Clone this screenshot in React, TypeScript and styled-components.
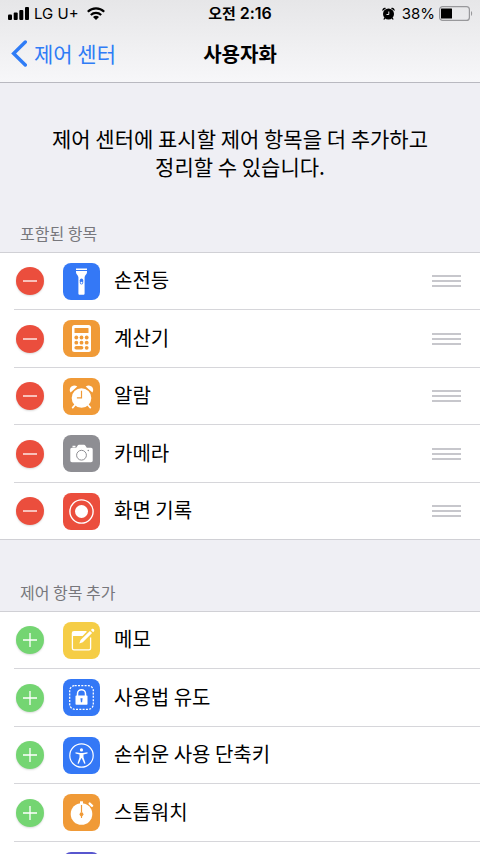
import React from 'react';
import styled, { createGlobalStyle } from 'styled-components';

const GlobalStyle = createGlobalStyle`
  * { box-sizing: border-box; }
  body {
    margin: 0;
    background: #efeff4;
    color: #000;
    font-family: Inter, "Noto Sans CJK KR", sans-serif;
  }
  button { font: inherit; border: 0; padding: 0; margin: 0; cursor: pointer; }
`;

const korean = '"Noto Sans CJK KR", sans-serif';

const Screen = styled.div`
  display: flex;
  flex-direction: column;
  height: 100vh;
  overflow: hidden;
`;

const TopBar = styled.header`
  flex: none;
  background: linear-gradient(#e6e6e8, #f7f7f9);
  border-bottom: 1px solid #b9b9c0;
`;

const StatusBar = styled.div`
  display: grid;
  grid-template-columns: 1fr auto 1fr;
  align-items: center;
  height: 27px;
  padding: 0 7px;
  font-size: 16px;
  line-height: 20px;
`;

const StatusGroup = styled.div<{ $end?: boolean }>`
  display: flex;
  align-items: center;
  justify-content: ${(p) => (p.$end ? 'flex-end' : 'flex-start')};
  gap: ${(p) => (p.$end ? 4 : 5)}px;
  white-space: nowrap;
  svg { flex: none; }
`;

const Carrier = styled.span`
  font-size: 15px;
  margin-right: 3px;
`;

const Clock = styled.time`
  font-weight: 600;
`;

const Meridiem = styled.span`
  font-size: 15px;
`;

const Percent = styled.span`
  margin-left: 3px;
  font-size: 15px;
`;

const NavBar = styled.nav`
  display: grid;
  grid-template-columns: 1fr auto 1fr;
  align-items: center;
  height: 55px;
  padding: 0 11px 2px;
  font-family: ${korean};
`;

const BackLink = styled.a`
  display: flex;
  align-items: center;
  gap: 7px;
  color: #2f7cf6;
  font-size: 21px;
  line-height: 30px;
  text-decoration: none;
`;

const BackText = styled.span`
  padding-bottom: 2px;
`;

const Title = styled.h1`
  margin: 0;
  font-size: 20px;
  font-weight: 700;
  line-height: 30px;
`;

const Content = styled.main`
  flex: 1;
  min-height: 0;
  overflow-y: auto;
  scrollbar-width: none;
  font-family: ${korean};
`;

const Intro = styled.p`
  margin: 0;
  padding: 41px 48px 40px;
  font-size: 21px;
  line-height: 28px;
  text-align: center;
  word-break: keep-all;
`;

const Section = styled.section`
  & + & { padding-top: 40px; }
`;

const SectionTitle = styled.h2`
  margin: 0;
  padding: 1px 20px 7px;
  color: #77777c;
  font-size: 16px;
  font-weight: 400;
  line-height: 24px;
  ${Section} + ${Section} > & { padding-top: 0; }
`;

const List = styled.ul`
  margin: 0;
  padding: 0;
  list-style: none;
  background: #fff;
  border-bottom: 1px solid #d0d0d5;
`;

const Row = styled.li`
  display: flex;
  height: 58px;
  padding-left: 14px;
  &:nth-child(odd) { height: 57px; }
  &:first-child { background: linear-gradient(#d0d0d5, #d0d0d5) top / 100% 1px no-repeat; }
`;

const RowBody = styled.div`
  flex: 1;
  display: flex;
  align-items: center;
  padding: 1px 19px 0 2px;
  ${Row} + ${Row} & { border-top: 1px solid #d6d6da; padding-top: 0; }
`;

const ActionButton = styled.button<{ $add?: boolean }>`
  display: grid;
  place-items: center;
  width: 28px;
  height: 28px;
  border-radius: 50%;
  color: #fff;
  background: ${(p) => (p.$add ? '#74d572' : '#eb4e3d')};
  box-shadow: 0 1px 2px rgba(0, 0, 0, 0.15);
`;

const AppIcon = styled.span<{ $color: string }>`
  display: block;
  width: 37px;
  height: 37px;
  margin: 0 14px 0 19px;
  border-radius: 8px;
  color: ${(p) => p.$color};
  background: ${(p) => p.$color};
  svg { display: block; }
`;

const Label = styled.span`
  flex: 1;
  padding-bottom: 2px;
  font-size: 20px;
  line-height: 30px;
`;

const DragHandle = styled.button`
  display: block;
  color: #c7c7cc;
  background: none;
  svg { display: block; }
`;

const glyphs: Record<string, React.ReactNode> = {
  flashlight: (
    <>
      <path d="M13 5.5h11v1.5H13z M13 8h11v1.2c0 2.2-2.4 3-2.4 5V30.500c0 .8-.5 1.300-1.300 1.300h-3.600c-.8 0-1.300-.5-1.300-1.300V14.200c0-2-2.400-2.800-2.400-5z" fill="#fff" />
      <rect x="16.800" y="15.500" width="3.400" height="6" rx="1.700" fill="currentColor" />
      <circle cx="18.500" cy="19.700" r="1" fill="#fff" />
    </>
  ),
  calculator: (
    <>
      <rect x="9" y="5" width="19" height="27" rx="2.500" fill="#fff" />
      <g fill="currentColor">
        <rect x="11.500" y="8" width="14" height="5" rx="0.600" />
        {[17.500, 22.700].map((y) => [13.300, 18.500, 23.700].map((x) => <circle key={`${x}-${y}`} cx={x} cy={y} r="1.900" />))}
        <rect x="11.400" y="26" width="9" height="3.600" rx="1.800" />
        <circle cx="23.700" cy="27.800" r="1.900" />
      </g>
    </>
  ),
  alarm: (
    <>
      <circle cx="18.500" cy="20" r="9.800" fill="#fff" />
      <path d="M7.600 14.600C4.800 10.300 9.600 5.400 14.300 8.400zM29.400 14.600c2.800-4.300-2-9.200-6.700-6.200z" fill="#fff" />
      <path d="M12 27l-2.300 2.600M25 27l2.300 2.600" stroke="#fff" strokeWidth="1.800" strokeLinecap="round" />
      <path d="M18.500 12.800v7h-4.600" stroke="currentColor" strokeWidth="1.200" fill="none" />
    </>
  ),
  camera: (
    <>
      <path d="M9.500 10.800h3v1.400h-3zM9 12.800h4.200l1.500-2.400c.3-.5.700-.7 1.200-.7h5.200c.5 0 .9.200 1.200.7l1.500 2.400H28c1 0 1.700.7 1.700 1.700v11c0 1-.7 1.700-1.700 1.700H9c-1 0-1.700-.7-1.700-1.700v-11c0-1 .7-1.700 1.700-1.700z" fill="#fff" />
      <circle cx="18.500" cy="20.200" r="4.900" stroke="currentColor" strokeWidth="1" fill="none" />
      <circle cx="25.300" cy="15.500" r="0.800" fill="currentColor" />
    </>
  ),
  record: (
    <>
      <circle cx="18.500" cy="18.500" r="11.600" stroke="#fff" strokeWidth="1.400" fill="none" />
      <circle cx="18.500" cy="18.500" r="6.500" fill="#fff" />
    </>
  ),
  notes: (
    <>
      <path d="M23.500 9.600H11c-1 0-1.600.6-1.600 1.600v15c0 1 .6 1.600 1.600 1.600h15c1 0 1.600-.6 1.600-1.600V15.500" stroke="#fff" strokeWidth="1.300" fill="none" />
      <path d="M9.400 10h14l-3.800 4H9.400z" fill="#fff" />
      <path d="M16.300 21.500l1.300-3.600 9.300-9 2.200 2.200-9.300 9.100zM27.900 8l1-1c1.200-1 3.200 1 2.200 2.200l-1 1z" fill="#fff" />
    </>
  ),
  guided: (
    <>
      <rect x="6.700" y="6.700" width="23.600" height="23.600" rx="5" stroke="#fff" strokeWidth="1.300" strokeDasharray="2 1.300" fill="none" />
      <path d="M14.500 17v-2.300a4 4 0 0 1 8 0V17" stroke="#fff" strokeWidth="1.500" fill="none" />
      <rect x="12.500" y="16.600" width="12" height="9.200" rx="0.800" fill="#fff" />
      <path d="M17.400 19.300h2.200l-.5 4h-1.200z" fill="currentColor" />
    </>
  ),
  accessibility: (
    <>
      <circle cx="18.500" cy="18.500" r="11.700" stroke="#fff" strokeWidth="1.200" fill="none" />
      <circle cx="18.500" cy="12.900" r="1.600" fill="#fff" />
      <path d="M12.500 15.200l4.600.7h2.800l4.600-.7v1.200l-4 1v2.800l2 6.200-1.200.4-2.500-5.600h-.6l-2.500 5.600-1.200-.4 2-6.200v-2.800l-4-1z" fill="#fff" />
    </>
  ),
  stopwatch: (
    <>
      <circle cx="18.500" cy="20" r="10.800" fill="#fff" />
      <path d="M17 7.300h3v3h-3z" fill="#fff" />
      <path d="M26.700 9.600l2.400 2.200" stroke="#fff" strokeWidth="2.400" strokeLinecap="round" />
      <path d="M18.500 11v7.500" stroke="currentColor" strokeWidth="1.200" />
      <circle cx="18.500" cy="20.200" r="1.900" fill="currentColor" />
      <path d="M17.700 21h1.600l-.3 3h-1z" fill="currentColor" />
    </>
  ),
};

interface Control {
  name?: string;
  icon?: string;
  color: string;
}

const included: Control[] = [
  { name: '손전등', icon: 'flashlight', color: '#3478f6' },
  { name: '계산기', icon: 'calculator', color: '#f09a37' },
  { name: '알람', icon: 'alarm', color: '#f09a37' },
  { name: '카메라', icon: 'camera', color: '#8e8e93' },
  { name: '화면 기록', icon: 'record', color: '#eb4e3d' },
];

const available: Control[] = [
  { name: '메모', icon: 'notes', color: '#f5cd46' },
  { name: '사용법 유도', icon: 'guided', color: '#3478f6' },
  { name: '손쉬운 사용 단축키', icon: 'accessibility', color: '#3478f6' },
  { name: '스톱워치', icon: 'stopwatch', color: '#f09a37' },
  { color: '#5856ce' },
];

function ControlRow({ control, add }: { control: Control; add?: boolean }) {
  const name = control.name ?? '';
  return (
    <Row>
      <RowBody>
        <ActionButton type="button" $add={add} aria-label={`${name} ${add ? '추가' : '제거'}`.trim()}>
          <svg width="16" height="16" viewBox="0 0 16 16" stroke="currentColor" strokeWidth="1.300" aria-hidden="true">
            <path d={add ? 'M1 8h14M8 1v14' : 'M1 8h14'} />
          </svg>
        </ActionButton>
        <AppIcon $color={control.color}>
          {control.icon && (
            <svg width="37" height="37" viewBox="0 0 37 37" aria-hidden="true">{glyphs[control.icon]}</svg>
          )}
        </AppIcon>
        <Label>{name}</Label>
        {!add && (
          <DragHandle type="button" aria-label={`${name} 순서 변경`}>
            <svg width="29" height="12" viewBox="0 0 29 12" fill="currentColor" aria-hidden="true">
              <path d="M0 0h29v2H0zM0 5h29v2H0zM0 10h29v2H0z" />
            </svg>
          </DragHandle>
        )}
      </RowBody>
    </Row>
  );
}

export default function App() {
  return (
    <Screen>
      <GlobalStyle />
      <TopBar>
        <StatusBar>
          <StatusGroup>
            <svg width="22" height="13" viewBox="0 0 22 13" aria-hidden="true">
              <rect x="1" y="7.500" width="4" height="5.500" rx="1" />
              <rect x="6.700" y="5.500" width="4" height="7.500" rx="1" />
              <rect x="12.300" y="3" width="4" height="10" rx="1" />
              <rect x="18" y="0" width="4" height="13" rx="1" />
            </svg>
            <Carrier>LG U+</Carrier>
            <svg width="18" height="13" viewBox="0 0 18 13" fill="none" stroke="#000" strokeWidth="2.200" aria-hidden="true">
              <path d="M.8 4.800c4.700-4.500 11.700-4.500 16.400 0M3.800 8c3-2.800 7.400-2.800 10.400 0" />
              <path d="M9 13l-3-3.100c1.700-1.500 4.300-1.500 6 0z" fill="#000" stroke="none" />
            </svg>
          </StatusGroup>
          <Clock><Meridiem>오전</Meridiem> 2:16</Clock>
          <StatusGroup $end>
            <svg width="13" height="13" viewBox="0 0 13 13" aria-hidden="true">
              <circle cx="6.500" cy="7" r="5.500" />
              <path d="M.5 4C-.2 1.800 2 .1 4 1.200zM12.500 4c.7-2.200-1.500-3.900-3.500-2.800z" />
              <path d="M3 10.800l-1.200 1.700M10 10.800l1.200 1.700" stroke="#000" strokeWidth="1.300" />
              <path d="M6.800 4.500v3H4.500" stroke="#eaeaec" strokeWidth="1" fill="none" />
            </svg>
            <Percent>38%</Percent>
            <svg width="34" height="15" viewBox="0 0 34 15" aria-hidden="true">
              <rect x="0.600" y="0.600" width="29.800" height="13.800" rx="3" fill="none" stroke="#98989b" strokeWidth="1.200" />
              <rect x="2" y="2.500" width="11" height="10" rx="0.500" />
              <path d="M32 5c1.500.7 1.500 4.300 0 5z" fill="#98989b" />
            </svg>
          </StatusGroup>
        </StatusBar>
        <NavBar>
          <BackLink href="#control-center">
            <svg width="16" height="27" viewBox="0 0 16 27" fill="none" stroke="currentColor" strokeWidth="3.400" strokeLinecap="round" aria-hidden="true">
              <path d="M14.300 2L2.600 13.500l11.700 11.500" />
            </svg>
            <BackText>제어 센터</BackText>
          </BackLink>
          <Title>사용자화</Title>
        </NavBar>
      </TopBar>
      <Content>
        <Intro>제어 센터에 표시할 제어 항목을 더 추가하고 정리할 수 있습니다.</Intro>
        <Section>
          <SectionTitle>포함된 항목</SectionTitle>
          <List>
            {included.map((c) => <ControlRow key={c.color + c.name} control={c} />)}
          </List>
        </Section>
        <Section>
          <SectionTitle>제어 항목 추가</SectionTitle>
          <List>
            {available.map((c) => <ControlRow key={c.color + c.name} control={c} add />)}
          </List>
        </Section>
      </Content>
    </Screen>
  );
}
